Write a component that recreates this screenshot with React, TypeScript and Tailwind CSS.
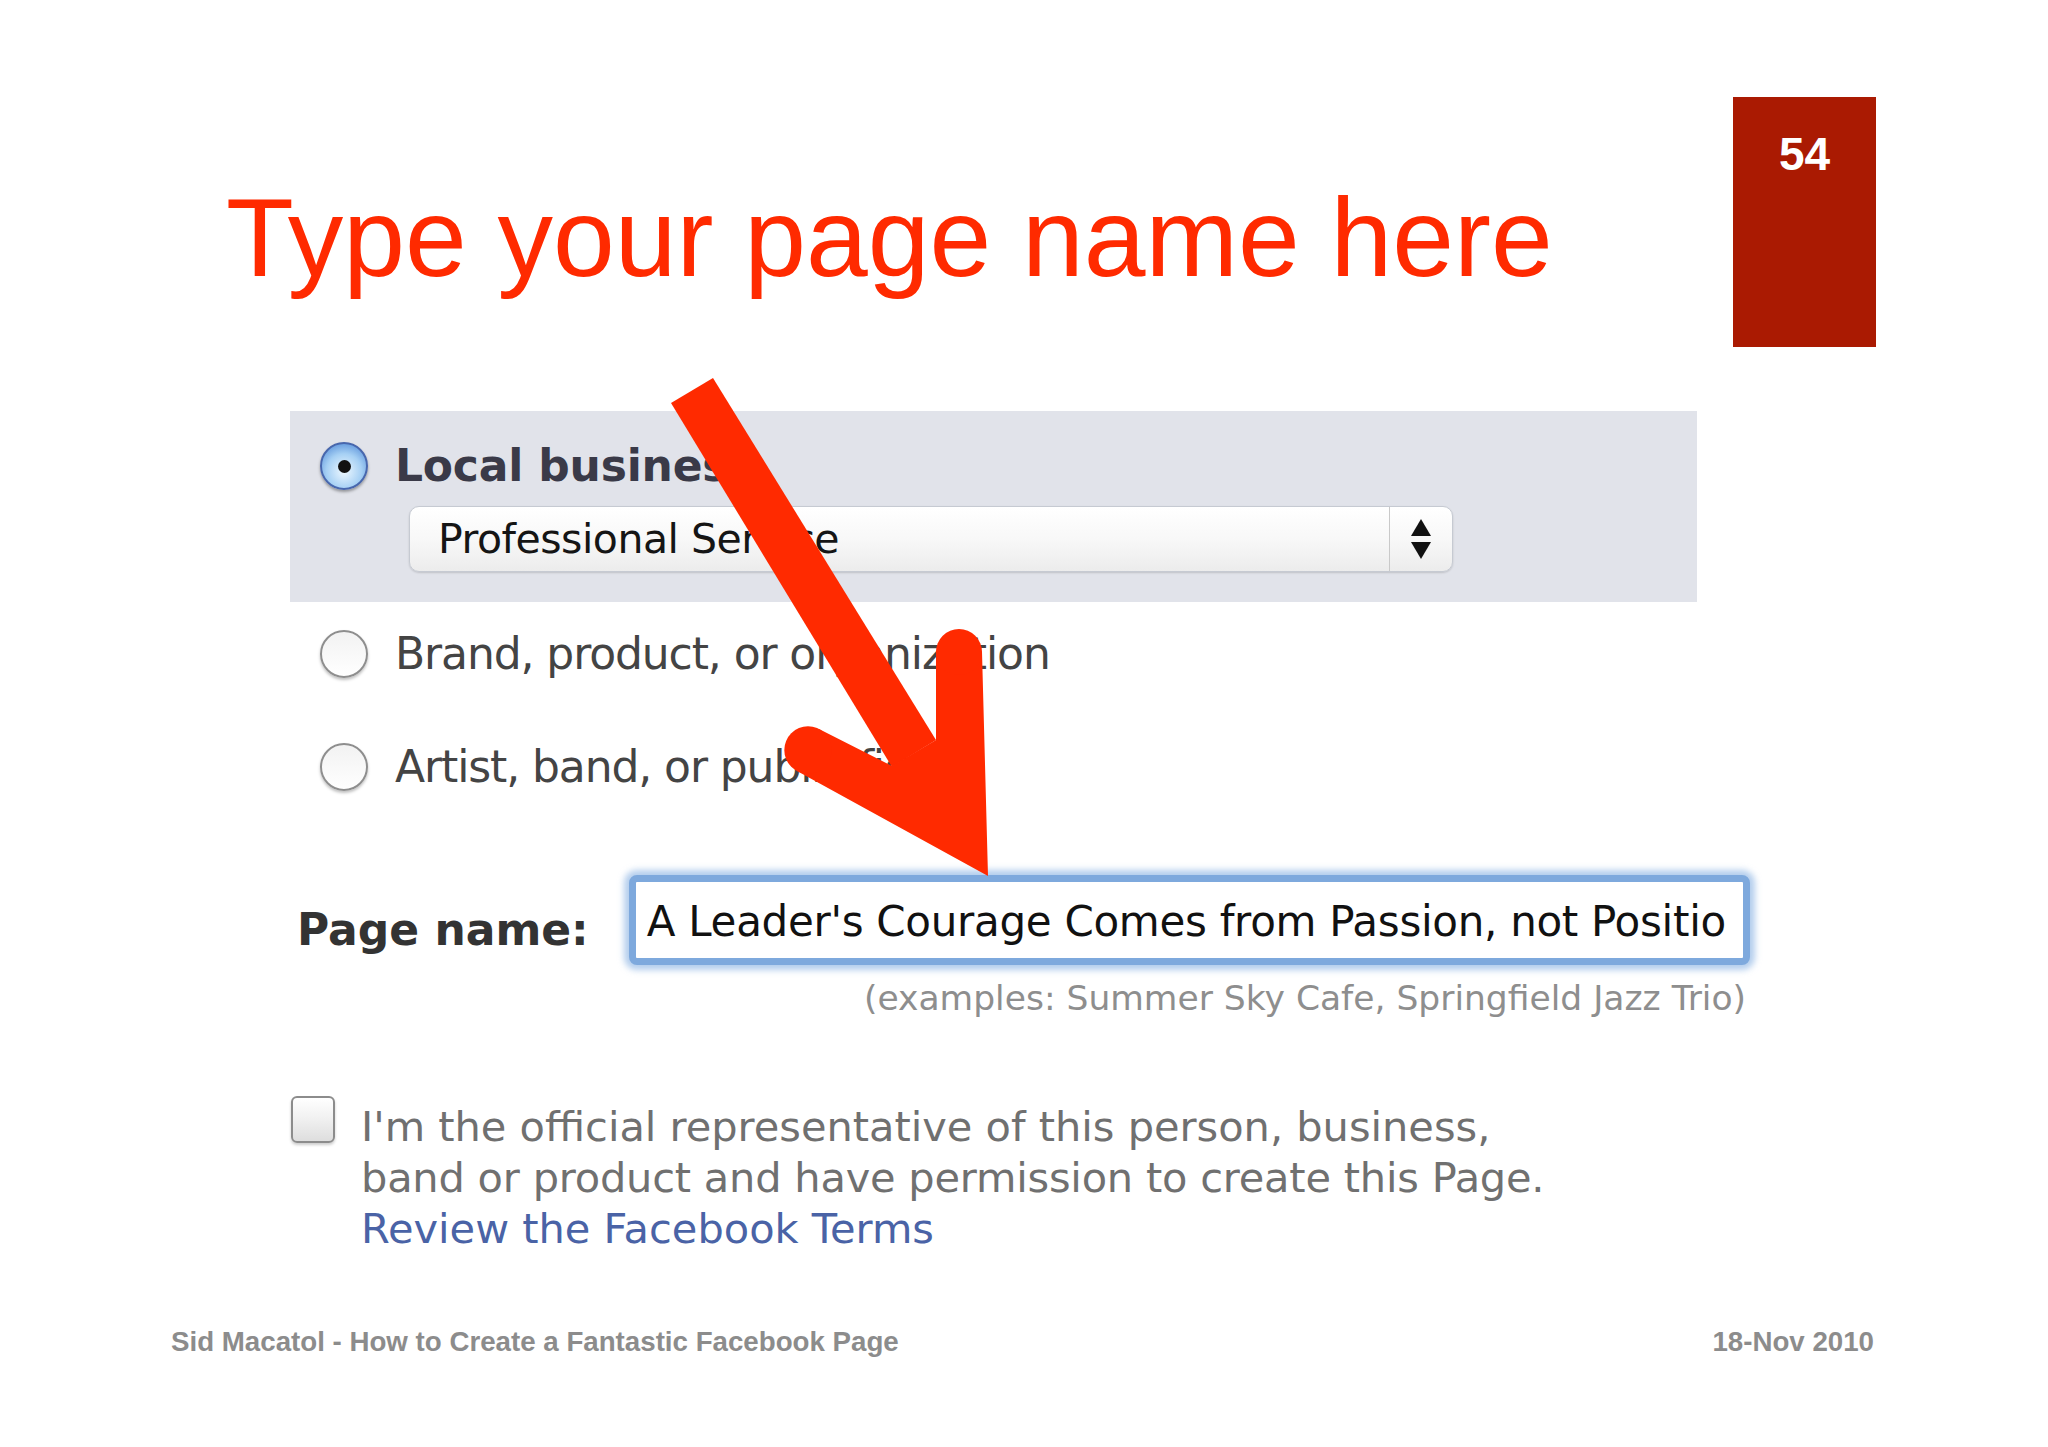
import React from "react";

function RadioOn() {
  return (
    <div className="w-[48px] h-[48px] shrink-0 rounded-full border-2 border-[#4867ad] bg-[radial-gradient(circle_at_50%_62%,#eef8ff_0%,#a6d0f4_50%,#3f7bd0_100%)] shadow-[0_2px_3px_rgba(0,0,0,0.35)] flex items-center justify-center">
      <div className="w-[13px] h-[13px] rounded-full bg-[#111]" />
    </div>
  );
}

function RadioOff() {
  return (
    <div className="w-[48px] h-[48px] shrink-0 rounded-full border-2 border-[#8e8e8e] bg-gradient-to-b from-[#f2f2f2] to-white shadow-[0_2px_3px_rgba(0,0,0,0.25)]" />
  );
}

export default function App() {
  return (
    <div className="relative w-[2048px] h-[1447px] bg-white overflow-hidden flex flex-col">
      {/* header */}
      <div className="flex items-start pl-[226px] pr-[172px] pt-[97px]">
        <h1 className="mt-[86px] text-[111px] leading-[111px] text-[#ff2a00] font-['Liberation_Sans',Arial,sans-serif] whitespace-nowrap">
          Type your page name here
        </h1>
        <div className="ml-auto w-[143px] h-[250px] bg-[#aa1a02] pt-[34px] text-center text-white font-bold text-[46px] leading-[46px] font-['Liberation_Sans',Arial,sans-serif]">
          54
        </div>
      </div>

      {/* form */}
      <div className="ml-[290px] mt-[64px] w-[1460px] font-['DejaVu_Sans',sans-serif]">
        <div className="w-[1407px] bg-[#e1e3ea] pl-[30px] pt-[30px] pb-[30px]">
          <div className="flex items-center h-[50px] gap-[27px]">
            <RadioOn />
            <span className="text-[44px] leading-[50px] font-bold text-[#3a3a48] tracking-[-0.2px] whitespace-nowrap">
              Local business
            </span>
          </div>
          <div className="ml-[89px] mt-[15px] w-[1044px] h-[66px] flex rounded-[10px] border border-[#c6cad2] bg-gradient-to-b from-white via-[#f8f8f8] to-[#ececec] shadow-[0_1px_2px_rgba(0,0,0,0.15)]">
            <div className="flex-1 pl-[28px] flex items-center text-[41px] leading-[50px] text-[#151515] tracking-[-0.5px] whitespace-nowrap">
              Professional Service
            </div>
            <div className="w-[63px] border-l border-[#c9c9c9] flex items-center justify-center">
              <svg width="22" height="44" viewBox="0 0 22 44">
                <polygon points="11,2 21,19 1,19" fill="#111" />
                <polygon points="1,25 21,25 11,42" fill="#111" />
              </svg>
            </div>
          </div>
        </div>

        <div className="pl-[30px] mt-[27px] flex items-center h-[50px] gap-[27px]">
          <RadioOff />
          <span className="text-[44px] leading-[50px] text-[#444] tracking-[-1.1px] whitespace-nowrap">
            Brand, product, or organization
          </span>
        </div>
        <div className="pl-[30px] mt-[63px] flex items-center h-[50px] gap-[27px]">
          <RadioOff />
          <span className="text-[44px] leading-[50px] text-[#444] tracking-[-1.1px] whitespace-nowrap">
            Artist, band, or public figure
          </span>
        </div>

        {/* page name */}
        <div className="mt-[83px] flex items-start">
          <div className="ml-[7px] w-[332px] mt-[30px] text-[44px] leading-[50px] font-bold text-[#333] whitespace-nowrap">
            Page name:
          </div>
          <div className="w-[1122px] h-[90px] rounded-[8px] border-[7px] border-[#7ea9dd] bg-white shadow-[0_0_6px_5px_rgba(140,180,228,0.65)] overflow-hidden pl-[11px] pt-[19px]">
            <div className="text-[42px] leading-[42px] text-[#111] tracking-[-0.3px] whitespace-nowrap">
              A Leader's Courage Comes from Passion, not Positio
            </div>
          </div>
        </div>
        <div className="mt-[13px] pr-[4px] text-right text-[34.5px] leading-[40px] text-[#8e8e8e] whitespace-nowrap">
          (examples: Summer Sky Cafe, Springfield Jazz Trio)
        </div>

        {/* checkbox */}
        <div className="mt-[78px] flex items-start">
          <div className="ml-[1px] w-[44px] h-[47px] shrink-0 rounded-[6px] border-2 border-[#8c8c8c] bg-gradient-to-b from-white via-[#f0f0f0] to-[#dedede] shadow-[0_2px_3px_rgba(0,0,0,0.2)]" />
          <div className="ml-[26px] mt-[5px] text-[41.5px] leading-[51px] text-[#707070] whitespace-nowrap">
            I'm the official representative of this person, business,
            <br />
            <span className="tracking-[-0.2px]">band or product and have permission to create this Page.</span>
            <br />
            <span className="text-[#4a63a6]">Review the Facebook Terms</span>
          </div>
        </div>
      </div>

      {/* footer */}
      <div className="mt-auto pb-[92px] pl-[171px] pr-[174px] flex justify-between text-[27.7px] leading-[27px] font-bold text-[#8c8c8c] font-['Liberation_Sans',Arial,sans-serif]">
        <span>Sid Macatol - How to Create a Fantastic Facebook Page</span>
        <span>18-Nov 2010</span>
      </div>

      {/* red arrow overlay */}
      <svg
        className="absolute inset-0 pointer-events-none"
        width="2048"
        height="1447"
        viewBox="0 0 2048 1447"
      >
        <g fill="#ff2a00">
          <polygon points="671,403 713,378 936,740 892,767" />
          <polygon points="819,729 892,766 936,740 936,652 982,652 988,876 797,771" />
          <circle cx="808" cy="750" r="23.7" />
          <circle cx="959" cy="652" r="23" />
        </g>
      </svg>
    </div>
  );
}
